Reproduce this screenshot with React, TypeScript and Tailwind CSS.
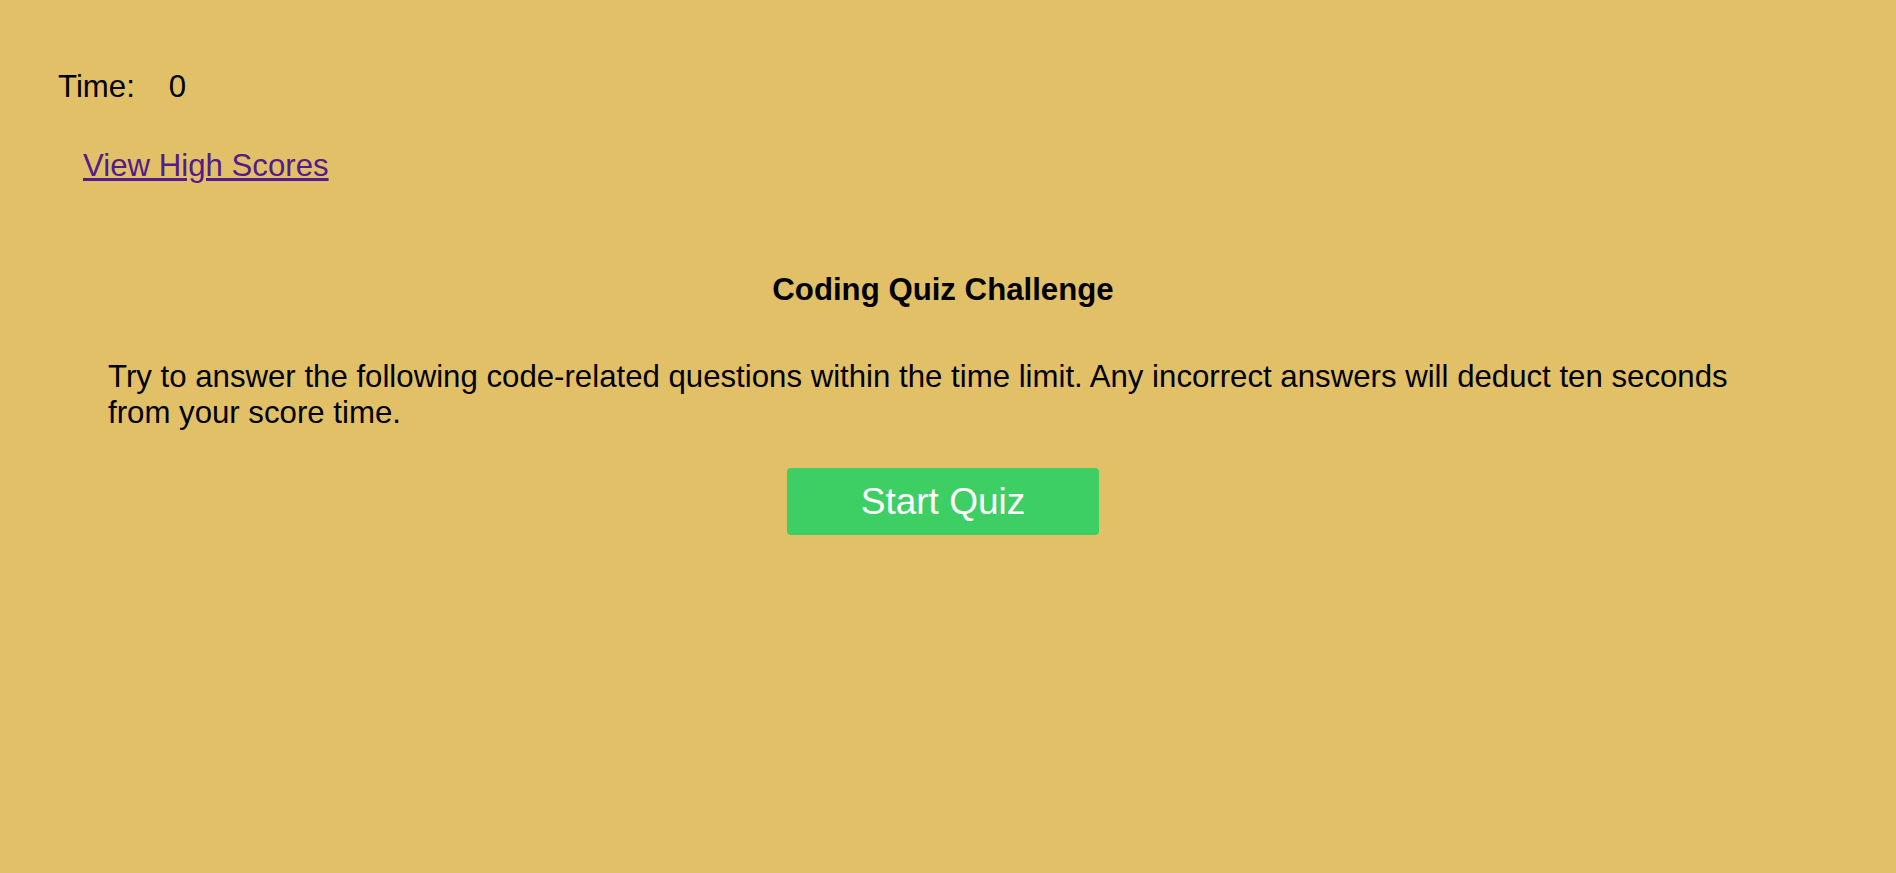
import React from 'react';

const App: React.FC = () => {
  return (
    <div className="min-h-[873px] w-full bg-[#e1c067] text-black font-['Liberation_Sans',Arial,sans-serif] pt-[69px]">
      <header>
        <div className="flex items-center gap-[34px] pl-[58px] text-[31.2px] leading-[36px]">
          <span>Time:</span>
          <span>0</span>
        </div>
        <div className="mt-[43px] pl-[83px] text-[31.2px] leading-[36px]">
          <a href="#" className="text-[#551a8b] underline">View High Scores</a>
        </div>
      </header>

      <main className="ml-[108px] w-[1670px]">
        <h2 className="mt-[88px] text-center text-[31.2px] leading-[36px] font-bold">Coding Quiz Challenge</h2>
        <p className="mt-[51px] text-[31.2px] leading-[36px]">
          Try to answer the following code-related questions within the time limit. Any incorrect answers will deduct ten seconds from your score time.
        </p>
        <button className="mx-auto mt-[37px] flex h-[67px] w-[312px] items-center justify-center rounded-[4px] bg-[#3ecf64] text-[37px] text-white">
          Start Quiz
        </button>
      </main>
    </div>
  );
};

export default App;
